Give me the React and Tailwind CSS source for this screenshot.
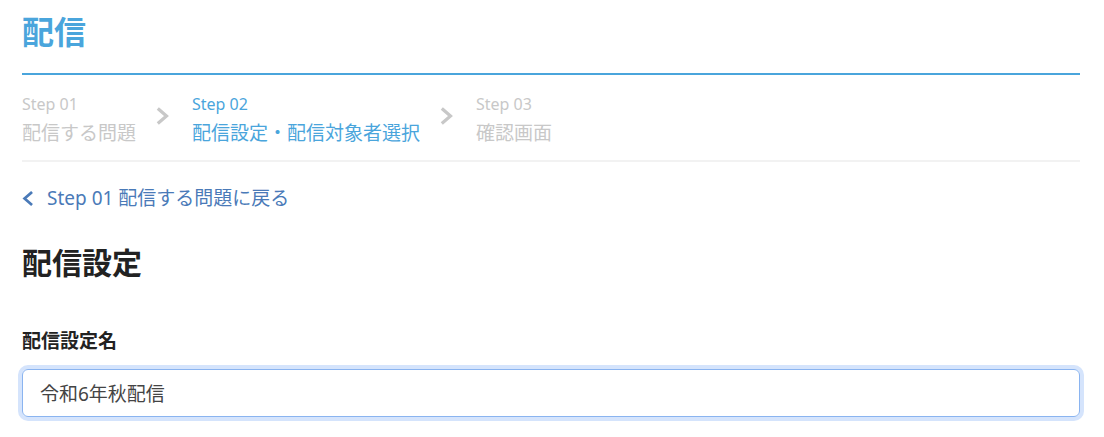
import React from "react";

const steps = [
  { no: "Step 01", label: "配信する問題", active: false },
  { no: "Step 02", label: "配信設定・配信対象者選択", active: true },
  { no: "Step 03", label: "確認画面", active: false },
];

const Chevron = ({ className, dir = "right" }) => (
  <svg viewBox="0 0 14 18" className={className} fill="none" stroke="currentColor" strokeWidth="3.2" strokeLinecap="square">
    {dir === "right" ? <path d="M3 2.5l7.5 6.5L3 15.5" /> : <path d="M10.5 2.5L3 9l7.5 6.5" />}
  </svg>
);

const App = () => {
  return (
    <div
      className="min-h-[437px] bg-white pl-[22px] pr-[24px] pt-[12px]"
      style={{ fontFamily: '"Noto Sans", "Noto Sans CJK JP", sans-serif' }}
    >
      <h1 className="text-[32px] font-bold leading-[40px] text-[#4aa5dc]">配信</h1>
      <div className="mt-[21px] h-[2px] bg-[#4aa5dc]" />

      <div className="flex items-center border-b-2 border-[#f2f2f2] pt-[19px] pb-[13px]">
        {steps.map((s, i) => (
          <React.Fragment key={s.no}>
            {i > 0 && <Chevron className="ml-[20px] mr-[22px] mb-[10px] h-[18px] w-[14px] text-[#c8c8c8]" />}
            <div className={s.active ? "text-[#4aa5dc]" : "text-[#c8c8c8]"}>
              <div className="text-[16px] leading-[20px]">{s.no}</div>
              <div className="mt-[5px] text-[19px] leading-[28px]">{s.label}</div>
            </div>
          </React.Fragment>
        ))}
      </div>

      <a className="mt-[22px] flex items-center gap-[13px] text-[19px] leading-[28px] text-[#4a7ab8]">
        <Chevron dir="left" className="h-[17px] w-[12px]" />
        <span>Step 01 配信する問題に戻る</span>
      </a>

      <h2 className="mt-[31px] text-[30px] font-bold leading-[40px] text-[#222]">配信設定</h2>

      <label className="mt-[45px] block text-[19px] font-bold leading-[26px] text-[#222]">配信設定名</label>
      <input
        defaultValue="令和6年秋配信"
        className="mt-[15px] block h-[48px] w-full rounded-[6px] border border-[#8ab4f0] px-[17px] text-[19px] text-[#444] outline-none ring-4 ring-[#d5e4fc]"
      />
    </div>
  );
};

export default App;
